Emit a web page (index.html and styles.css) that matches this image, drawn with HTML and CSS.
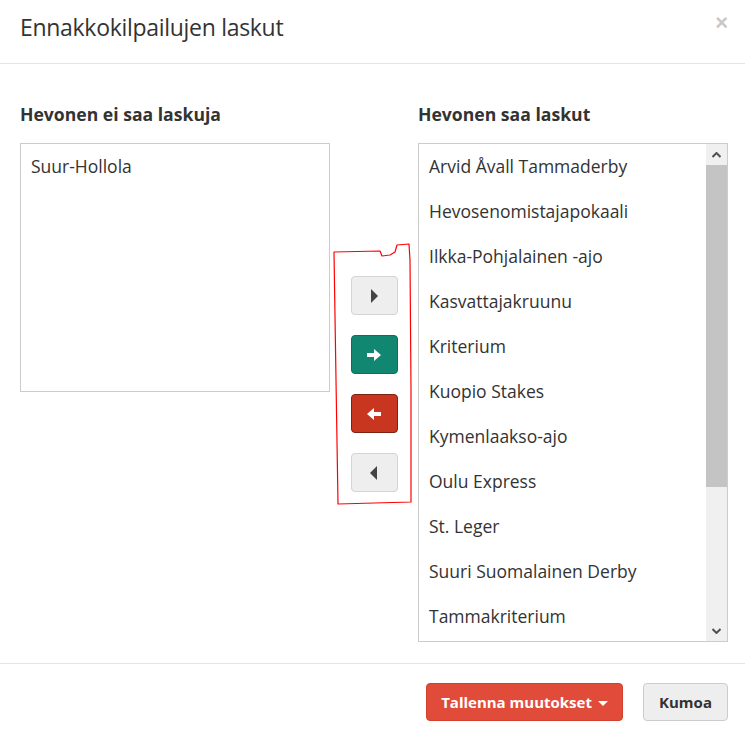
FILE: index.html
```html
<!DOCTYPE html>
<html lang="fi">
<head>
    <meta charset="UTF-8">
    <title>Ennakkokilpailujen laskut</title>
    <link rel="stylesheet" href="styles.css">
</head>
<body>
    <div class="modal">
        <div class="modal-header">
            <h4 class="modal-title">Ennakkokilpailujen laskut</h4>
            <button class="close">&times;</button>
        </div>
        <div class="modal-body">
            <div class="column">
                <h5 class="list-title">Hevonen ei saa laskuja</h5>
                <div class="list-box small">
                    <ul class="items">
                        <li>Suur-Hollola</li>
                    </ul>
                </div>
            </div>
            <div class="movers">
                <button class="btn btn-grey">
                    <svg width="8" height="14" viewBox="0 0 8 14"><path d="M1 0 L8 7 L1 14 Z" fill="#444"/></svg>
                </button>
                <button class="btn btn-green">
                    <svg width="16" height="12" viewBox="0 0 16 12"><path d="M1 4 H8 V0 L15 6 L8 12 V8 H1 Z" fill="#fff"/></svg>
                </button>
                <button class="btn btn-red">
                    <svg width="16" height="12" viewBox="0 0 16 12"><path d="M15 4 H8 V0 L1 6 L8 12 V8 H15 Z" fill="#fff"/></svg>
                </button>
                <button class="btn btn-grey">
                    <svg width="8" height="14" viewBox="0 0 8 14"><path d="M7 0 L0 7 L7 14 Z" fill="#444"/></svg>
                </button>
            </div>
            <div class="column">
                <h5 class="list-title">Hevonen saa laskut</h5>
                <div class="list-box tall">
                    <ul class="items">
                        <li>Arvid Åvall Tammaderby</li>
                        <li>Hevosenomistajapokaali</li>
                        <li>Ilkka-Pohjalainen -ajo</li>
                        <li>Kasvattajakruunu</li>
                        <li>Kriterium</li>
                        <li>Kuopio Stakes</li>
                        <li>Kymenlaakso-ajo</li>
                        <li>Oulu Express</li>
                        <li>St. Leger</li>
                        <li>Suuri Suomalainen Derby</li>
                        <li>Tammakriterium</li>
                    </ul>
                    <div class="scrollbar">
                        <div class="scroll-arrow">
                            <svg width="9" height="6" viewBox="0 0 9 6"><path d="M0.5 5 L4.5 1 L8.5 5" stroke="#505050" stroke-width="2" fill="none"/></svg>
                        </div>
                        <div class="scroll-thumb"></div>
                        <div class="scroll-track"></div>
                        <div class="scroll-arrow">
                            <svg width="9" height="6" viewBox="0 0 9 6"><path d="M0.5 1 L4.5 5 L8.5 1" stroke="#505050" stroke-width="2" fill="none"/></svg>
                        </div>
                    </div>
                </div>
            </div>
            <svg class="scribble" width="90" height="270" viewBox="0 0 90 270">
                <path d="M4 12 L50 11 L52 16 L60 15 L65 12 L67 5 L79 4 L80 20 L81 150 L81 262 L8 264 L6 140 L4 12 Z" stroke="#f00" stroke-width="1.2" fill="none" stroke-linejoin="round"/>
            </svg>
        </div>
        <div class="modal-footer">
            <button class="btn-save">Tallenna muutokset <span class="caret"></span></button>
            <button class="btn-cancel">Kumoa</button>
        </div>
    </div>
</body>
</html>
```

FILE: styles.css
```css
body {
    margin: 0;
    font-family: "Open Sans", Arial, sans-serif;
    color: #333;
    background: #fff;
}

.modal {
    width: 745px;
    height: 738px;
    display: flex;
    flex-direction: column;
}

.modal-header {
    height: 64px;
    border-bottom: 1px solid #e5e5e5;
    display: flex;
    justify-content: space-between;
    align-items: flex-start;
    padding: 0 17px 0 20px;
    box-sizing: border-box;
}

.modal-title {
    margin: 11px 0 0;
    font-size: 23px;
    font-weight: 400;
    line-height: 32px;
    letter-spacing: -0.3px;
}

.close {
    margin-top: 12px;
    border: none;
    background: none;
    padding: 0;
    font-family: Arial, sans-serif;
    font-size: 22px;
    font-weight: bold;
    color: #c8c8c8;
    line-height: 22px;
}

.modal-body {
    position: relative;
    display: flex;
    padding: 0 17px 0 20px;
    height: 599px;
    box-sizing: border-box;
}

.column {
    width: 310px;
}

.list-title {
    margin: 38px 0 17px;
    font-size: 17.6px;
    font-weight: 700;
    line-height: 24px;
}

.list-box {
    border: 1px solid #ccc;
    display: flex;
    overflow: hidden;
}

.list-box.small {
    height: 247px;
}

.list-box.tall {
    height: 497px;
}

.items {
    list-style: none;
    margin: 0;
    padding: 0;
    flex: 1;
}

.items li {
    height: 45px;
    line-height: 45px;
    padding-left: 10px;
    font-size: 17.5px;
    white-space: nowrap;
}

.scrollbar {
    width: 21px;
    display: flex;
    flex-direction: column;
    background: #f0f0f0;
}

.scroll-arrow {
    height: 21px;
    display: flex;
    align-items: center;
    justify-content: center;
}

.scroll-thumb {
    height: 322px;
    background: #c4c4c4;
}

.scroll-track {
    flex: 1;
}

.movers {
    width: 88px;
    display: flex;
    flex-direction: column;
    align-items: center;
    gap: 20px;
    padding-top: 212px;
}

.btn {
    width: 47px;
    height: 39px;
    border-radius: 4px;
    display: flex;
    align-items: center;
    justify-content: center;
    padding: 0;
}

.btn-grey {
    background: #eee;
    border: 1px solid #d4d4d4;
}

.btn-green {
    background: #118670;
    border: 1px solid #0d6e5b;
}

.btn-red {
    background: #c9361f;
    border: 1px solid #7e2214;
}

.scribble {
    position: absolute;
    left: 330px;
    top: 176px;
}

.modal-footer {
    border-top: 1px solid #e5e5e5;
    display: flex;
    justify-content: flex-end;
    gap: 20px;
    padding: 19px 17px 0 0;
    flex: 1;
}

.btn-save,
.btn-cancel {
    height: 38px;
    border-radius: 4px;
    font-family: "Open Sans", Arial, sans-serif;
    font-size: 15px;
    font-weight: 700;
    padding: 0;
    white-space: nowrap;
}

.btn-save {
    width: 197px;
    background: #e14b3a;
    border: 1px solid #d43f2e;
    color: #fff;
}

.btn-cancel {
    width: 85px;
    background: #eee;
    border: 1px solid #ccc;
    color: #333;
}

.caret {
    display: inline-block;
    width: 0;
    height: 0;
    border-top: 5px solid #fff;
    border-left: 5px solid transparent;
    border-right: 5px solid transparent;
    vertical-align: middle;
    margin-left: 2px;
}
```
